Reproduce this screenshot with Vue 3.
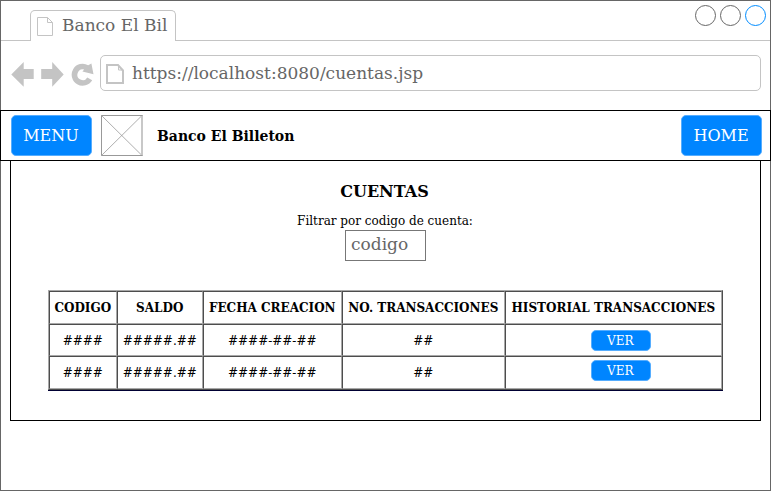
<script setup>
const rows = [
  { codigo: '####', saldo: '#####.##', fecha: '####-##-##', total: '##' },
  { codigo: '####', saldo: '#####.##', fecha: '####-##-##', total: '##' },
]
const columns = ['CODIGO', 'SALDO', 'FECHA CREACION', 'NO. TRANSACCIONES', 'HISTORIAL TRANSACCIONES']
</script>

<template>
  <div class="window">
    <div class="tabs">
      <div class="tab">
        <svg class="tab-icon" width="18" height="20" viewBox="0 0 18 20">
          <path d="M1.5 1.5H11.5L16.5 6.5V19.5H1.5ZM11.5 1.5V6.5H16.5" />
        </svg>
        <span>Banco El Bil</span>
      </div>
      <div class="controls">
        <svg width="72" height="22" viewBox="0 0 72 22">
          <circle cx="10.5" cy="10.5" r="10" stroke="#666" />
          <circle cx="35.5" cy="10.5" r="10" stroke="#666" />
          <circle cx="60.5" cy="10.5" r="10" stroke="#008cff" />
        </svg>
      </div>
    </div>

    <div class="toolbar">
      <svg class="nav" width="89" height="30" viewBox="0 0 89 30">
        <path class="solid" d="M.3 14.5L12.7 2V9H22.7V19H12.7V26.7Z" />
        <path class="solid" d="M52.7 14.5L41.2 2V9H30.2V19H41.2V26.7Z" />
        <path class="solid" d="M77.2 5.2A11 11 0 1 0 81.2 20.2L76.3 17.4A5.3 5.3 0 1 1 73.2 9.6L71.4 11.4L82.5 14.3L80.4 3.4Z" />
      </svg>
      <div class="address">
        <svg width="18" height="20" viewBox="0 0 18 20">
          <path class="page" d="M1 1H12L17 6.5V19H1Z" />
          <path class="fold" d="M12.5 1V6H17" />
        </svg>
        <span>https://localhost:8080/cuentas.jsp</span>
      </div>
    </div>

    <header class="header">
      <button class="big">MENU</button>
      <svg class="logo" width="42" height="41" viewBox="0 0 42 41">
        <path class="cross" d="M.5 .5L41 40.5M41 .5L.5 40.5" />
        <path class="edge" d="M41 0V41" />
        <path class="frame" d="M41.5 .5H.5V40.5H41.5" />
      </svg>
      <strong>Banco El Billeton</strong>
      <button class="big home">HOME</button>
    </header>

    <main class="content">
      <h1>CUENTAS</h1>
      <label>Filtrar por codigo de cuenta:</label>
      <div class="field">codigo</div>
      <table>
        <colgroup>
          <col class="c1" /><col class="c2" /><col class="c3" /><col class="c4" /><col class="c5" />
        </colgroup>
        <thead>
          <tr>
            <th v-for="c in columns" :key="c">{{ c }}</th>
          </tr>
        </thead>
        <tbody>
          <tr v-for="(r, i) in rows" :key="i">
            <td>{{ r.codigo }}</td>
            <td>{{ r.saldo }}</td>
            <td>{{ r.fecha }}</td>
            <td>{{ r.total }}</td>
            <td class="action"><button class="small">VER</button></td>
          </tr>
        </tbody>
      </table>
    </main>
  </div>
</template>

<style>
body { background: #fff; }
</style>

<style scoped>
* { box-sizing: border-box; }
.window {
  width: 771px;
  height: 491px;
  border: 1px solid #666;
  font-family: "DejaVu Serif", serif;
  color: #000;
}
.tabs {
  height: 40px;
  display: flex;
  align-items: flex-end;
  border-bottom: 1px solid #c4c4c4;
}
.tab {
  width: 146px;
  height: 31px;
  margin: 0 0 -1px 29px;
  padding-left: 6px;
  display: flex;
  background: #fff;
  border: 1px solid #c4c4c4;
  border-bottom: 0;
  border-radius: 5px 5px 0 0;
  color: #666;
  font-size: 17px;
  line-height: 29px;
  white-space: nowrap;
}
.tab-icon { margin: 5px 8px 0 -1px; }
.tab-icon path { fill: none; stroke: #c4c4c4; }
.controls { margin-left: auto; align-self: flex-start; height: 22px; margin-top: 4px; margin-right: 3px; }
.controls svg { display: block; }
.controls circle { fill: none; }
.toolbar {
  height: 69px;
  display: flex;
  padding: 14px 9px 0 10px;
}
.nav { margin-top: 5px; flex: none; }
.solid { fill: #c4c4c4; }
.address {
  flex: 1;
  height: 36px;
  border: 1px solid #c4c4c4;
  border-radius: 5px;
  display: flex;
  padding-left: 5px;
  color: #666;
  font-size: 17px;
  line-height: 34px;
}
.address svg { margin: 8px 8px 0 0; }
.page { fill: none; stroke: #c4c4c4; stroke-width: 2; }
.fold { fill: none; stroke: #c4c4c4; }
.header {
  height: 51px;
  margin: 0 -1px;
  border: 1px solid #000;
  display: flex;
  align-items: flex-start;
  padding: 4px 8px 0 10px;
  font-size: 14px;
  line-height: 43px;
}
button {
  font-family: inherit;
  border: 1px solid #55adff;
  padding: 0;
  background: #0085ff;
  color: #fff;
  border-radius: 5px;
}
.big { width: 81px; height: 41px; font-size: 16px; padding-right: 1px; }
.home { margin-left: auto; }
.logo { margin: 0 14px 0 9px; }
.logo path { fill: none; }
.frame { stroke: #999; }
.cross { stroke: #999; stroke-width: .8; }
.edge { stroke: #c8c8c8; stroke-width: 2; }
.content {
  width: 751px;
  height: 261px;
  margin: -1px 0 0 9px;
  border: 1px solid #000;
  display: flex;
  flex-direction: column;
  align-items: center;
}
h1 { margin: 21px 2px 0 0; font-size: 16px; line-height: 20px; }
label { margin-top: 10px; margin-right: 1px; font-size: 12px; line-height: 18px; }
.field {
  width: 81px;
  height: 31px;
  margin-right: 1px;
  border: 1px solid #777;
  padding-left: 5.5px;
  color: #666;
  font-size: 17px;
  line-height: 27px;
}
table {
  width: 675px;
  margin-top: 29px;
  table-layout: fixed;
  border-collapse: separate;
  border-spacing: 0;
  border: 1px solid;
  border-color: #a8a8a8 #4d4d4d #4d4d4d #a8a8a8;
  box-shadow: 0 1px 0 #000033;
  font-size: 12px;
}
.c1 { width: 68px; }
.c2 { width: 86px; }
.c3 { width: 139px; }
.c4 { width: 163px; }
.c5 { width: 217px; }
th, td {
  height: 32px;
  padding: 0 .5px 0 0;
  border: 1px solid;
  border-color: #4d4d4d #a8a8a8 #a8a8a8 #4d4d4d;
  text-align: center;
  vertical-align: middle;
  white-space: nowrap;
}
th, tbody tr:last-child td { height: 33px; }
tbody tr:first-child td { padding-top: 2px; }
tbody tr .action.action { vertical-align: top; padding: 5px 0 0 14px; }
tbody tr:last-child .action.action { padding-top: 3px; }
.small { display: block; width: 60px; height: 21px; margin: 0 auto; font-size: 12px; line-height: 17px; padding: 2px .5px 0 0; }
</style>
